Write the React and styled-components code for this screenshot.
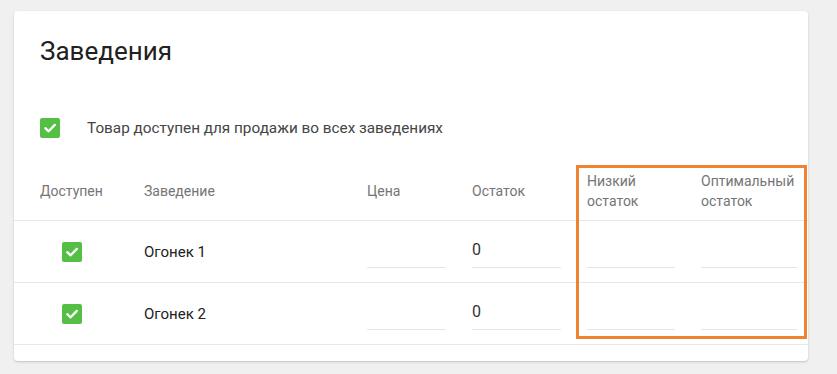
import React from "react";
import styled, { createGlobalStyle } from "styled-components";

const Global = createGlobalStyle`
  html, body { margin: 0; padding: 0; background: #f0f0f0; }
  body { font-family: Roboto, "Noto Sans", Arial, sans-serif; }
  * { box-sizing: border-box; }
`;

const Page = styled.div`
  padding: 11px 0 0 14px;
  height: 374px;
`;

const Card = styled.section`
  position: relative;
  width: 794px;
  background: #fff;
  border-radius: 4px;
  box-shadow: 0 1px 3px rgba(0, 0, 0, 0.14), 0 1px 1px rgba(0, 0, 0, 0.06);
  padding: 24px 0 16px;
`;

const Title = styled.h2`
  margin: 0 0 0 26px;
  font-size: 26px;
  line-height: 32px;
  font-weight: 400;
  color: #212121;
`;

const AllRow = styled.label`
  display: flex;
  align-items: center;
  gap: 27px;
  margin: 51px 0 0 26px;
  height: 20px;
  font-size: 15.3px;
  color: #454545;
`;

const Box = styled.span`
  display: inline-flex;
  align-items: center;
  justify-content: center;
  width: 20px;
  height: 20px;
  border-radius: 2px;
  background: #55bf45;
  flex: none;
`;

const Grid = styled.div`
  display: grid;
  grid-template-columns: 78px 197px 79px 89px 88px 96px;
  column-gap: 26px;
  padding: 0 11px 0 26px;
  border-bottom: 1px solid #e8e8e8;
  align-items: center;
`;

const HeadRow = styled(Grid)`
  margin-top: 24px;
  height: 59px;
  padding-bottom: 1px;
`;

const BodyRow = styled(Grid)`
  height: 62px;
`;

const Th = styled.div`
  font-size: 14px;
  line-height: 20px;
  color: #757575;
`;

const CheckCell = styled.div`
  width: 64px;
  display: flex;
  justify-content: center;
`;

const Name = styled.div`
  font-size: 15px;
  color: #212121;
`;

const Field = styled.input`
  align-self: end;
  margin-bottom: 14px;
  width: 100%;
  height: 31px;
  padding: 0 0 5px 0;
  border: none;
  border-bottom: 1px solid #e6e6e6;
  outline: none;
  background: transparent;
  font-family: Roboto, Arial, sans-serif;
  font-size: 16px;
  color: #333;
`;

const Highlight = styled.div`
  position: absolute;
  left: 562px;
  top: 154px;
  width: 231px;
  height: 174px;
  border: 3px solid #f08331;
  pointer-events: none;
`;

const Check = () => (
  <Box>
    <svg width="14" height="14" viewBox="0 0 14 14">
      <path d="M2.3 7.2 L5.6 10.3 L11.8 3.9" fill="none" stroke="#fff" strokeWidth="2.3" strokeLinecap="round" strokeLinejoin="round" />
    </svg>
  </Box>
);

const rows = [
  { name: "Огонек 1", stock: "0" },
  { name: "Огонек 2", stock: "0" },
];

export default function App() {
  return (
    <Page>
      <Global />
      <Card>
        <Title>Заведения</Title>
        <AllRow>
          <Check />
          <span>Товар доступен для продажи во всех заведениях</span>
        </AllRow>
        <HeadRow>
          <Th>Доступен</Th>
          <Th>Заведение</Th>
          <Th>Цена</Th>
          <Th>Остаток</Th>
          <Th>Низкий остаток</Th>
          <Th>Оптимальный остаток</Th>
        </HeadRow>
        {rows.map((r) => (
          <BodyRow key={r.name}>
            <CheckCell>
              <Check />
            </CheckCell>
            <Name>{r.name}</Name>
            <Field defaultValue="" />
            <Field defaultValue={r.stock} />
            <Field defaultValue="" />
            <Field defaultValue="" />
          </BodyRow>
        ))}
        <Highlight />
      </Card>
    </Page>
  );
}
